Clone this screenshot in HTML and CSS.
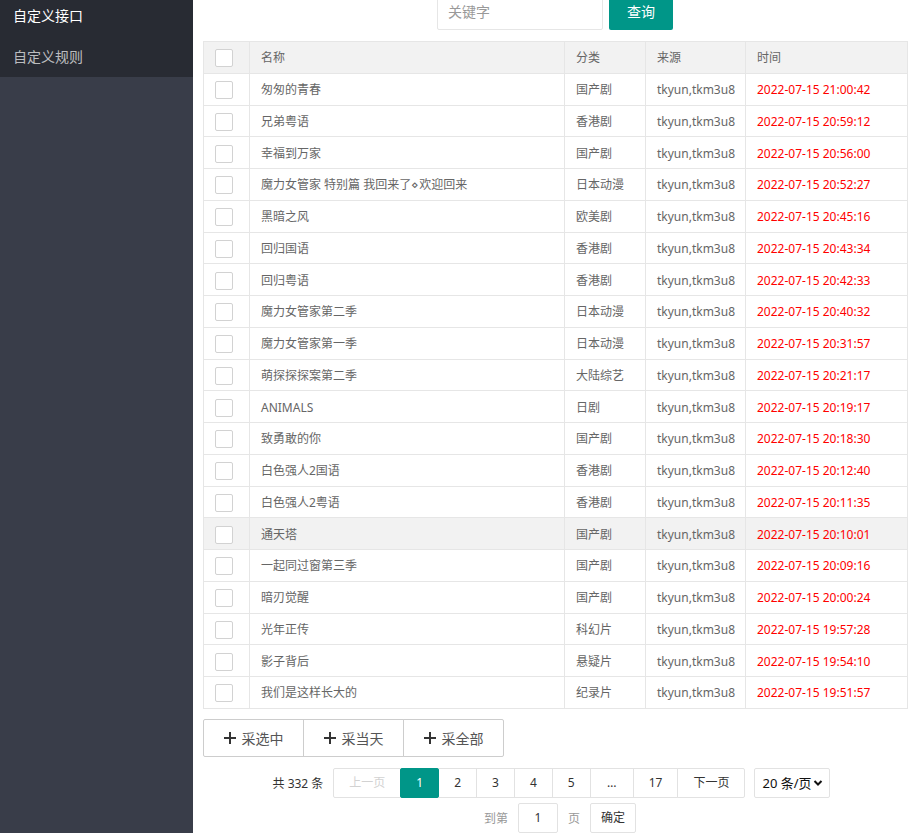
FILE: index.html
```html
<!DOCTYPE html>
<html lang="zh-CN">
<head>
<meta charset="utf-8">
<title>采集</title>
<link rel="stylesheet" href="styles.css">
</head>
<body>
<div class="app">
  <aside class="side">
    <ul class="side-nav">
      <li class="side-item active">自定义接口</li>
      <li class="side-item">自定义规则</li>
    </ul>
  </aside>
  <main class="main">
    <form class="search">
      <input class="search-input" type="text" placeholder="关键字">
      <button class="btn-teal" type="button">查询</button>
    </form>

    <table class="grid">
      <colgroup>
        <col class="c-check"><col class="c-name"><col class="c-cat"><col class="c-src"><col class="c-time">
      </colgroup>
      <thead>
        <tr><th><span class="cb"></span></th><th>名称</th><th>分类</th><th>来源</th><th>时间</th></tr>
      </thead>
      <tbody>
        <tr><td><span class="cb"></span></td><td>匆匆的青春</td><td>国产剧</td><td>tkyun,tkm3u8</td><td class="time">2022-07-15 21:00:42</td></tr>
        <tr><td><span class="cb"></span></td><td>兄弟粤语</td><td>香港剧</td><td>tkyun,tkm3u8</td><td class="time">2022-07-15 20:59:12</td></tr>
        <tr><td><span class="cb"></span></td><td>幸福到万家</td><td>国产剧</td><td>tkyun,tkm3u8</td><td class="time">2022-07-15 20:56:00</td></tr>
        <tr><td><span class="cb"></span></td><td>魔力女管家 特别篇 我回来了⋄欢迎回来</td><td>日本动漫</td><td>tkyun,tkm3u8</td><td class="time">2022-07-15 20:52:27</td></tr>
        <tr><td><span class="cb"></span></td><td>黑暗之风</td><td>欧美剧</td><td>tkyun,tkm3u8</td><td class="time">2022-07-15 20:45:16</td></tr>
        <tr><td><span class="cb"></span></td><td>回归国语</td><td>香港剧</td><td>tkyun,tkm3u8</td><td class="time">2022-07-15 20:43:34</td></tr>
        <tr><td><span class="cb"></span></td><td>回归粤语</td><td>香港剧</td><td>tkyun,tkm3u8</td><td class="time">2022-07-15 20:42:33</td></tr>
        <tr><td><span class="cb"></span></td><td>魔力女管家第二季</td><td>日本动漫</td><td>tkyun,tkm3u8</td><td class="time">2022-07-15 20:40:32</td></tr>
        <tr><td><span class="cb"></span></td><td>魔力女管家第一季</td><td>日本动漫</td><td>tkyun,tkm3u8</td><td class="time">2022-07-15 20:31:57</td></tr>
        <tr><td><span class="cb"></span></td><td>萌探探探案第二季</td><td>大陆综艺</td><td>tkyun,tkm3u8</td><td class="time">2022-07-15 20:21:17</td></tr>
        <tr><td><span class="cb"></span></td><td>ANIMALS</td><td>日剧</td><td>tkyun,tkm3u8</td><td class="time">2022-07-15 20:19:17</td></tr>
        <tr><td><span class="cb"></span></td><td>致勇敢的你</td><td>国产剧</td><td>tkyun,tkm3u8</td><td class="time">2022-07-15 20:18:30</td></tr>
        <tr><td><span class="cb"></span></td><td>白色强人2国语</td><td>香港剧</td><td>tkyun,tkm3u8</td><td class="time">2022-07-15 20:12:40</td></tr>
        <tr><td><span class="cb"></span></td><td>白色强人2粤语</td><td>香港剧</td><td>tkyun,tkm3u8</td><td class="time">2022-07-15 20:11:35</td></tr>
        <tr class="hover"><td><span class="cb"></span></td><td>通天塔</td><td>国产剧</td><td>tkyun,tkm3u8</td><td class="time">2022-07-15 20:10:01</td></tr>
        <tr><td><span class="cb"></span></td><td>一起同过窗第三季</td><td>国产剧</td><td>tkyun,tkm3u8</td><td class="time">2022-07-15 20:09:16</td></tr>
        <tr><td><span class="cb"></span></td><td>暗刃觉醒</td><td>国产剧</td><td>tkyun,tkm3u8</td><td class="time">2022-07-15 20:00:24</td></tr>
        <tr><td><span class="cb"></span></td><td>光年正传</td><td>科幻片</td><td>tkyun,tkm3u8</td><td class="time">2022-07-15 19:57:28</td></tr>
        <tr><td><span class="cb"></span></td><td>影子背后</td><td>悬疑片</td><td>tkyun,tkm3u8</td><td class="time">2022-07-15 19:54:10</td></tr>
        <tr><td><span class="cb"></span></td><td>我们是这样长大的</td><td>纪录片</td><td>tkyun,tkm3u8</td><td class="time">2022-07-15 19:51:57</td></tr>
      </tbody>
    </table>

    <div class="btn-group">
      <button class="btn-plain" type="button"><svg class="plus" viewBox="0 0 12 12" width="12" height="12"><path d="M6 0V12M0 6H12" stroke="#333" stroke-width="2"/></svg>采选中</button>
      <button class="btn-plain" type="button"><svg class="plus" viewBox="0 0 12 12" width="12" height="12"><path d="M6 0V12M0 6H12" stroke="#333" stroke-width="2"/></svg>采当天</button>
      <button class="btn-plain" type="button"><svg class="plus" viewBox="0 0 12 12" width="12" height="12"><path d="M6 0V12M0 6H12" stroke="#333" stroke-width="2"/></svg>采全部</button>
    </div>

    <div class="pager">
      <div class="pager-line first">
        <span class="pg-count">共 332 条</span>
        <span class="pg pg-prev disabled">上一页</span>
        <span class="pg curr">1</span>
        <span class="pg">2</span>
        <span class="pg">3</span>
        <span class="pg">4</span>
        <span class="pg">5</span>
        <span class="pg pg-dots">…</span>
        <span class="pg">17</span>
        <span class="pg pg-next">下一页</span>
        <span class="pg-limit">20 条/页<svg class="chev" viewBox="0 0 10 10" width="10" height="10"><path d="M1.5 3L5 6.5L8.5 3" stroke="#111" stroke-width="2" fill="none"/></svg></span>
      </div>
      <div class="pager-line">
        <span class="pg-skip">到第<span class="skip-input">1</span>页<span class="skip-btn">确定</span></span>
      </div>
    </div>
  </main>
</div>
</body>
</html>
```

FILE: styles.css
```css
* { box-sizing: border-box; }
html, body { margin: 0; padding: 0; }
body {
  font-family: "Noto Sans", "Noto Sans CJK SC", sans-serif;
  color: #666;
  background: #fff;
  overflow: hidden;
}
.app {
  display: flex;
  height: 833px;
}
.side {
  width: 193px;
  flex: none;
  background: #393d49;
}
.side-nav {
  list-style: none;
  margin: 0;
  padding: 6px 0 10px;
  background: #282b33;
  display: flex;
  flex-direction: column;
  gap: 21px;
}
.side-item {
  font-size: 14px;
  line-height: 20px;
  height: 20px;
  padding-left: 13px;
  color: rgba(255,255,255,.7);
}
.side-item.active { color: #fff; }

.main {
  flex: 1;
  min-width: 0;
  padding: 0 8px 0 10px;
}
.search {
  display: flex;
  justify-content: center;
  gap: 6px;
  margin: -8px 0 11px;
}
.search-input {
  width: 166px;
  height: 38px;
  border: 1px solid #e6e6e6;
  border-radius: 2px;
  padding: 0 10px;
  font: 14px "Noto Sans", "Noto Sans CJK SC", sans-serif;
  color: #333;
  outline: none;
}
.search-input::placeholder { color: #999; }
.btn-teal {
  width: 64px;
  height: 38px;
  border: none;
  border-radius: 2px;
  background: #009688;
  color: #fff;
  font: 14px "Noto Sans", "Noto Sans CJK SC", sans-serif;
  padding: 0;
}

.grid {
  width: 100%;
  table-layout: fixed;
  border-collapse: collapse;
  font-size: 12px;
  color: #666;
}
.c-check { width: 46px; }
.c-name { width: 315px; }
.c-cat { width: 81px; }
.c-src { width: 100px; }
.c-time { width: 162px; }
.grid th, .grid td {
  border: 1px solid #e6e6e6;
  height: 31.76px;
  padding: 2px 0 0 11px;
  text-align: left;
  font-weight: normal;
  line-height: 20px;
  white-space: nowrap;
  overflow: hidden;
  vertical-align: middle;
}
.grid thead th { background: #f2f2f2; }
.grid tr.hover td { background: #f2f2f2; }
.grid td.time { color: #ff0000; }
.cb {
  display: block;
  width: 18px;
  height: 18px;
  border: 1px solid #d2d2d2;
  border-radius: 2px;
  background: #fff;
}

.btn-group {
  display: flex;
  margin-top: 10px;
}
.btn-plain {
  width: 101px;
  height: 38px;
  display: flex;
  align-items: center;
  justify-content: center;
  gap: 6px;
  border: 1px solid #cdcdcd;
  background: #fff;
  color: #555;
  font: 14px "Noto Sans", "Noto Sans CJK SC", sans-serif;
  padding: 0;
  margin-right: -1px;
}
.btn-plain:first-child { border-radius: 2px 0 0 2px; }
.btn-plain:last-child { border-radius: 0 2px 2px 0; }
.plus { display: block; }

.pager {
  margin-top: 11px;
  padding-left: 20px;
  font-size: 12px;
}
.pager-line {
  display: flex;
  justify-content: center;
  align-items: center;
  margin-bottom: 5px;
}
.pager-line.first { padding-right: 27px; }
.pg-count {
  margin: 0 10px;
  color: #333;
}
.pg {
  height: 30px;
  line-height: 28px;
  padding: 0 15px;
  border: 1px solid #e2e2e2;
  margin-right: -1px;
  color: #333;
  background: #fff;
}
.pg-dots {
  width: 44px;
  padding: 0;
  text-align: center;
}
.pg-prev, .pg-next {
  width: 68px;
  padding: 0;
  text-align: center;
}
.pg-prev { border-radius: 2px 0 0 2px; }
.pg-next { border-radius: 0 2px 2px 0; }
.pg.disabled { color: #d2d2d2; }
.pg.curr {
  background: #009688;
  border-color: #009688;
  color: #fff;
  border-radius: 2px;
  position: relative;
}
.pg-limit {
  margin: 0 10px;
  height: 30px;
  width: 76px;
  border: 1px solid #e2e2e2;
  border-radius: 2px;
  display: flex;
  align-items: center;
  justify-content: space-between;
  padding: 0 6px 0 7px;
  color: #111;
  font-size: 13px;
}
.chev { display: block; }
.pg-skip {
  margin: 0 10px;
  display: flex;
  align-items: center;
  color: #999;
}
.skip-input {
  width: 40px;
  height: 30px;
  line-height: 28px;
  margin: 0 10px;
  border: 1px solid #e2e2e2;
  border-radius: 2px;
  text-align: center;
  color: #333;
}
.skip-btn {
  margin: 0 10px;
  height: 30px;
  line-height: 28px;
  padding: 0 10px;
  border: 1px solid #e2e2e2;
  border-radius: 2px;
  color: #333;
  background: #fff;
}
```
